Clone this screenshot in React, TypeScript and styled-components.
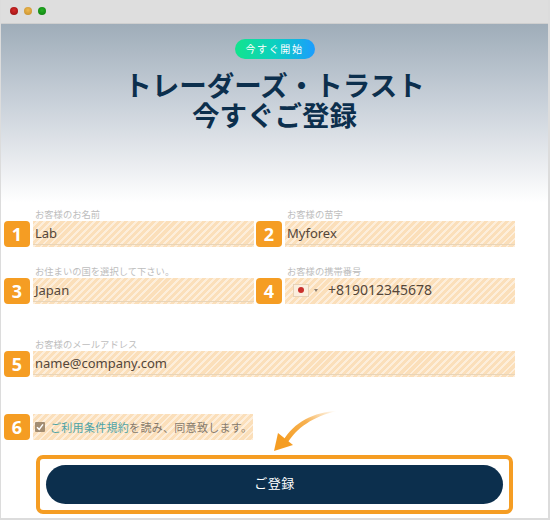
import React from "react";
import styled, { createGlobalStyle } from "styled-components";

const Global = createGlobalStyle`
  html, body { margin: 0; padding: 0; background: #fff; }
  body { font-family: "Noto Sans", "Noto Sans CJK JP", sans-serif; }
`;

const jp = `"Noto Sans CJK JP", "Noto Sans", sans-serif`;
const latin = `"Noto Sans", "Noto Sans CJK JP", sans-serif`;
const hatch = `repeating-linear-gradient(-45deg, #fdeedb 0 2px, #fbdfba 2px 5px)`;

const Page = styled.div`
  position: relative;
  width: 550px;
  height: 520px;
  box-sizing: border-box;
  overflow: hidden;
  display: flex;
  flex-direction: column;
  background: #fff;
  border: solid #dcdcdc;
  border-width: 0 2px 2px 1px;
`;

const TitleBar = styled.div`
  flex: none;
  height: 24px;
  box-sizing: border-box;
  display: flex;
  align-items: center;
  gap: 6px;
  padding: 0 0 1px 9px;
  background: #dedede;
  border-bottom: 1px solid #cfcfcf;
`;

const Light = styled.span<{ $c: string; $d: string }>`
  width: 8px;
  height: 8px;
  border-radius: 50%;
  background: radial-gradient(circle at 50% 40%, ${(p) => p.$c}, ${(p) => p.$d});
`;

const Hero = styled.header`
  flex: none;
  height: 184px;
  box-sizing: border-box;
  padding-top: 15px;
  display: flex;
  flex-direction: column;
  align-items: center;
  background: linear-gradient(180deg, #9fadb9 0%, #c8d0d9 42%, #e6e9ed 72%, #fff 97%);
`;

const Pill = styled.div`
  width: 80px;
  height: 20px;
  border-radius: 10px;
  display: flex;
  align-items: center;
  justify-content: center;
  background: linear-gradient(90deg, #12e48d 0%, #0bd0c0 50%, #1c9cff 100%);
  color: #fff;
  font: 400 10px/20px ${jp};
  letter-spacing: 1.6px;
`;

const Title = styled.h1`
  margin: 10px 0 0;
  color: #0c2f4d;
  font: 700 27.5px/30px ${jp};
  text-align: center;
`;

const Form = styled.form`
  flex: 1;
  display: flex;
  flex-direction: column;
  padding: 1px 0 0 3px;
`;

const Row = styled.div<{ $mt?: number }>`
  display: flex;
  gap: 2px;
  margin-top: ${(p) => p.$mt ?? 0}px;
`;

const Group = styled.div<{ $w: number }>`
  width: ${(p) => p.$w}px;
  display: flex;
  flex-direction: column;
`;

const Caption = styled.div`
  height: 12px;
  padding-left: 31px;
  color: #bdbdbd;
  font: 400 9.3px/10px ${jp};
  white-space: nowrap;
`;

const Line = styled.div`
  display: flex;
  gap: 3px;
`;

const Marker = styled.div`
  flex: none;
  width: 26px;
  height: 26px;
  border-radius: 4px;
  display: flex;
  align-items: center;
  justify-content: center;
  background: #f59d23;
  color: #fff;
  font: 700 18px/26px "Open Sans", "Noto Sans", sans-serif;
`;

const Field = styled.div`
  flex: 1;
  height: 26px;
  box-sizing: border-box;
  display: flex;
  align-items: center;
  padding: 0 0 2px 2px;
  background: ${hatch};
  color: #54463a;
  font: 400 13px/24px ${latin};
  position: relative;
  white-space: nowrap;
  &::after {
    content: "";
    position: absolute;
    left: 0;
    right: 0;
    bottom: 2px;
    height: 1px;
    background: #e9d5b9;
  }
`;

const PhoneField = styled(Field)`
  padding-left: 8px;
  font-size: 14px;
  &::after { display: none; }
`;

const Flag = styled.span`
  width: 16px;
  height: 13px;
  box-sizing: border-box;
  display: flex;
  align-items: center;
  justify-content: center;
  background: #fbeedd;
  border: 1px solid #e6d2b8;
  &::before {
    content: "";
    width: 6px;
    height: 6px;
    border-radius: 50%;
    background: #c9302c;
  }
`;

const Caret = styled.span`
  width: 0;
  height: 0;
  margin: 0 10px 0 5px;
  border: 2px solid transparent;
  border-top: 3px solid #8c7f72;
  border-bottom: 0;
`;

const AgreeField = styled.div`
  width: 220px;
  height: 26px;
  box-sizing: border-box;
  display: flex;
  align-items: center;
  gap: 5px;
  padding-left: 2px;
  background: ${hatch};
  color: #85796c;
  font: 400 11px/26px ${jp};
  letter-spacing: 0.3px;
  white-space: nowrap;
`;

const Check = styled.span`
  flex: none;
  width: 10px;
  height: 10px;
  border-radius: 1px;
  background: #a38d72;
  display: flex;
  align-items: center;
  justify-content: center;
`;

const TermsLink = styled.span`
  color: #4fa3a6;
`;

const ButtonFrame = styled.div`
  margin: 15px 0 0 32px;
  width: 477px;
  height: 59px;
  box-sizing: border-box;
  border: 4px solid #f59d23;
  border-radius: 7px;
  padding: 6px;
`;

const Submit = styled.button`
  display: block;
  width: 100%;
  height: 39px;
  border: 0;
  border-radius: 20px;
  padding: 0 0 4px;
  background: #0c2f4d;
  color: #fff;
  font: 400 13px/35px ${jp};
  letter-spacing: 0.5px;
`;

const Arrow = styled.svg`
  position: absolute;
  left: 269px;
  top: 408px;
`;

export default function App() {
  return (
    <>
      <Global />
      <Page>
        <TitleBar>
          <Light $c="#d62a2a" $d="#8f0f0f" />
          <Light $c="#efb94f" $d="#c08a2a" />
          <Light $c="#24b024" $d="#0d7a0d" />
        </TitleBar>
        <Hero>
          <Pill>今すぐ開始</Pill>
          <Title>
            トレーダーズ・トラスト
            <br />
            今すぐご登録
          </Title>
        </Hero>
        <Form>
          <Row>
            <Group $w={250}>
              <Caption>お客様のお名前</Caption>
              <Line>
                <Marker>1</Marker>
                <Field>Lab</Field>
              </Line>
            </Group>
            <Group $w={259}>
              <Caption>お客様の苗字</Caption>
              <Line>
                <Marker>2</Marker>
                <Field>Myforex</Field>
              </Line>
            </Group>
          </Row>
          <Row $mt={19}>
            <Group $w={250}>
              <Caption>お住まいの国を選択して下さい。</Caption>
              <Line>
                <Marker>3</Marker>
                <Field>Japan</Field>
              </Line>
            </Group>
            <Group $w={259}>
              <Caption>お客様の携帯番号</Caption>
              <Line>
                <Marker>4</Marker>
                <PhoneField>
                  <Flag />
                  <Caret />
                  <span>+819012345678</span>
                </PhoneField>
              </Line>
            </Group>
          </Row>
          <Row $mt={35}>
            <Group $w={511}>
              <Caption>お客様のメールアドレス</Caption>
              <Line>
                <Marker>5</Marker>
                <Field>name@company.com</Field>
              </Line>
            </Group>
          </Row>
          <Row $mt={37}>
            <Line>
              <Marker>6</Marker>
              <AgreeField>
                <Check>
                  <svg width="8" height="8" viewBox="0 0 8 8">
                    <path d="M1 4.2 3.2 6.4 7 1.4" fill="none" stroke="#fff" strokeWidth="1.5" />
                  </svg>
                </Check>
                <span>
                  <TermsLink>ご利用条件規約</TermsLink>を読み、同意致します。
                </span>
              </AgreeField>
            </Line>
          </Row>
          <ButtonFrame>
            <Submit type="button">ご登録</Submit>
          </ButtonFrame>
        </Form>
        <Arrow width="72" height="48" viewBox="0 0 72 48">
          <defs>
            <linearGradient id="tail" x1="1" y1="0" x2="0" y2="1">
              <stop offset="0" stopColor="#f59d23" stopOpacity="0" />
              <stop offset="0.45" stopColor="#f59d23" stopOpacity="0.8" />
              <stop offset="1" stopColor="#f59d23" />
            </linearGradient>
          </defs>
          <path d="M67 3 C44 4 24 14 13 33 L17 36 C26 20 44 8 67 3 Z" fill="url(#tail)" />
          <path d="M4 43 L8 25 L23 37 Z" fill="#f59d23" />
        </Arrow>
      </Page>
    </>
  );
}
